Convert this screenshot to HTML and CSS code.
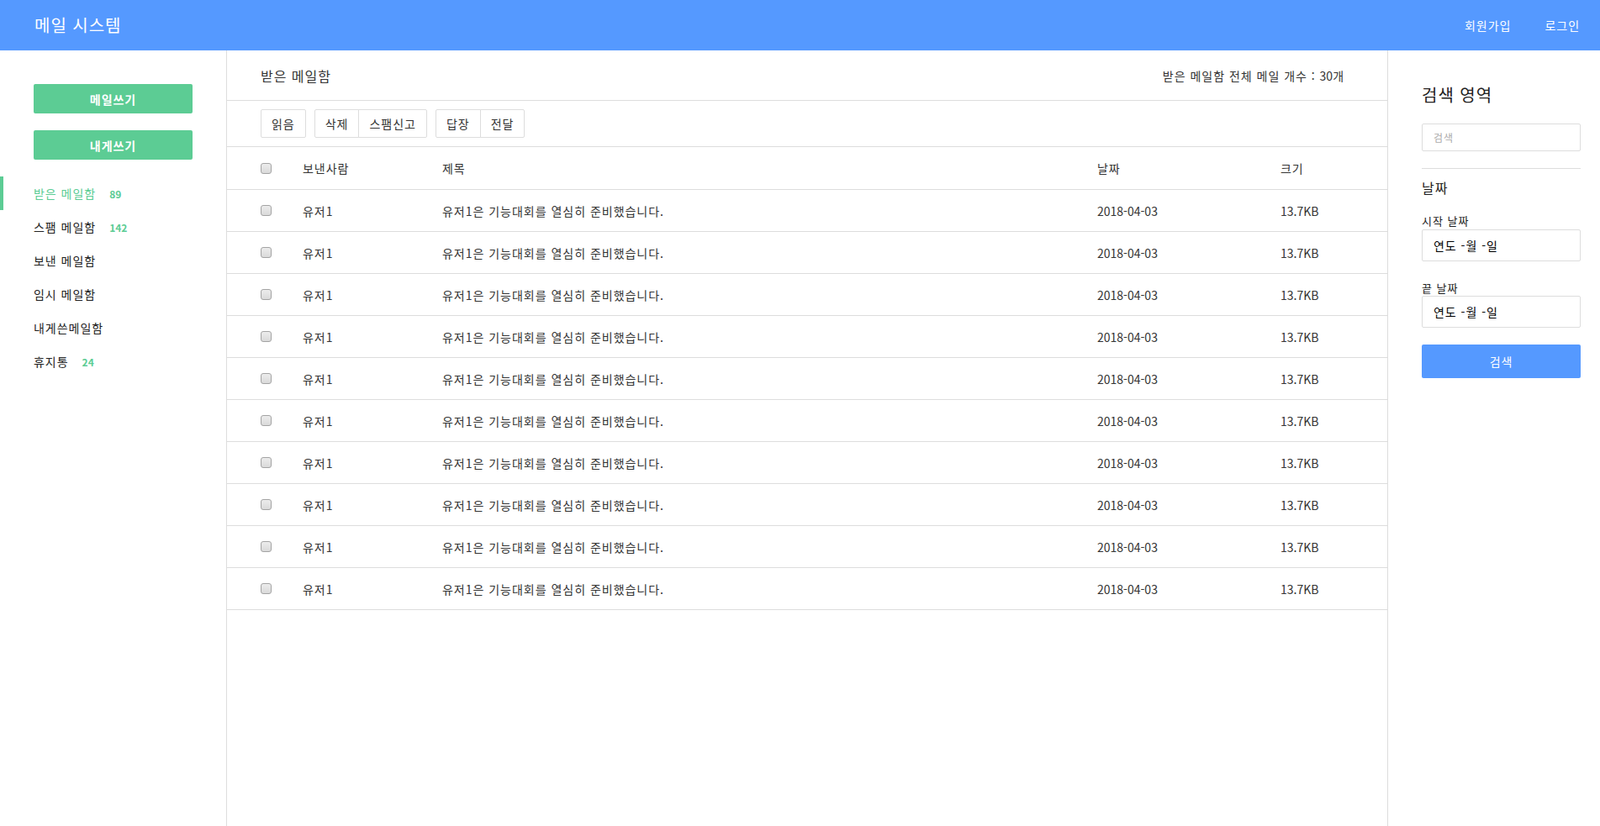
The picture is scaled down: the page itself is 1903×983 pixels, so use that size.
FILE: index.html
```html
<!DOCTYPE html>
<html lang="ko">
<head>
<meta charset="utf-8">
<title>메일 시스템</title>
<link rel="stylesheet" href="styles.css">
</head>
<body>
<header class="topbar">
  <div class="brand">메일 시스템</div>
  <nav class="top-links">
    <a href="#">회원가입</a>
    <a href="#">로그인</a>
  </nav>
</header>
<div class="layout">
  <aside class="sidebar">
    <button class="btn-green">메일쓰기</button>
    <button class="btn-green">내게쓰기</button>
    <ul class="folders">
      <li class="active"><span>받은 메일함</span><b class="badge">89</b></li>
      <li><span>스팸 메일함</span><b class="badge">142</b></li>
      <li><span>보낸 메일함</span></li>
      <li><span>임시 메일함</span></li>
      <li><span>내게쓴메일함</span></li>
      <li><span>휴지통</span><b class="badge">24</b></li>
    </ul>
  </aside>
  <main class="content">
    <div class="content-head">
      <h2>받은 메일함</h2>
      <div class="count">받은 메일함 전체 메일 개수 : <span class="num">30</span>개</div>
    </div>
    <div class="toolbar">
      <div class="btn-group"><button class="btn">읽음</button></div>
      <div class="btn-group"><button class="btn">삭제</button><button class="btn">스팸신고</button></div>
      <div class="btn-group"><button class="btn">답장</button><button class="btn">전달</button></div>
    </div>
    <table class="mail-table">
      <colgroup>
        <col class="c-check"><col class="c-from"><col class="c-title"><col class="c-date"><col>
      </colgroup>
      <thead>
        <tr><th class="cell-check"><input type="checkbox" class="chk"></th><th>보낸사람</th><th>제목</th><th>날짜</th><th>크기</th></tr>
      </thead>
      <tbody>
        <tr><td class="cell-check"><input type="checkbox" class="chk"></td><td>유저1</td><td>유저1은 기능대회를 열심히 준비했습니다.</td><td class="num">2018-04-03</td><td class="num">13.7KB</td></tr>
        <tr><td class="cell-check"><input type="checkbox" class="chk"></td><td>유저1</td><td>유저1은 기능대회를 열심히 준비했습니다.</td><td class="num">2018-04-03</td><td class="num">13.7KB</td></tr>
        <tr><td class="cell-check"><input type="checkbox" class="chk"></td><td>유저1</td><td>유저1은 기능대회를 열심히 준비했습니다.</td><td class="num">2018-04-03</td><td class="num">13.7KB</td></tr>
        <tr><td class="cell-check"><input type="checkbox" class="chk"></td><td>유저1</td><td>유저1은 기능대회를 열심히 준비했습니다.</td><td class="num">2018-04-03</td><td class="num">13.7KB</td></tr>
        <tr><td class="cell-check"><input type="checkbox" class="chk"></td><td>유저1</td><td>유저1은 기능대회를 열심히 준비했습니다.</td><td class="num">2018-04-03</td><td class="num">13.7KB</td></tr>
        <tr><td class="cell-check"><input type="checkbox" class="chk"></td><td>유저1</td><td>유저1은 기능대회를 열심히 준비했습니다.</td><td class="num">2018-04-03</td><td class="num">13.7KB</td></tr>
        <tr><td class="cell-check"><input type="checkbox" class="chk"></td><td>유저1</td><td>유저1은 기능대회를 열심히 준비했습니다.</td><td class="num">2018-04-03</td><td class="num">13.7KB</td></tr>
        <tr><td class="cell-check"><input type="checkbox" class="chk"></td><td>유저1</td><td>유저1은 기능대회를 열심히 준비했습니다.</td><td class="num">2018-04-03</td><td class="num">13.7KB</td></tr>
        <tr><td class="cell-check"><input type="checkbox" class="chk"></td><td>유저1</td><td>유저1은 기능대회를 열심히 준비했습니다.</td><td class="num">2018-04-03</td><td class="num">13.7KB</td></tr>
        <tr><td class="cell-check"><input type="checkbox" class="chk"></td><td>유저1</td><td>유저1은 기능대회를 열심히 준비했습니다.</td><td class="num">2018-04-03</td><td class="num">13.7KB</td></tr>
      </tbody>
    </table>
  </main>
  <aside class="search-panel">
    <h3 class="panel-title">검색 영역</h3>
    <input type="text" class="search-input" placeholder="검색">
    <div class="divider"></div>
    <h4 class="date-title">날짜</h4>
    <label class="field-label">시작 날짜</label>
    <div class="date-input">연도 -월 -일</div>
    <label class="field-label label-end">끝 날짜</label>
    <div class="date-input date-end">연도 -월 -일</div>
    <button class="btn-search">검색</button>
  </aside>
</div>
</body>
</html>
```

FILE: styles.css
```css
* { box-sizing: border-box; }
html, body { margin: 0; padding: 0; }
body {
  font-family: "Noto Sans CJK KR", "Noto Sans", sans-serif;
  font-size: 14px;
  color: #333;
  background: #fff;
  letter-spacing: 0.07em;
}
button, input { letter-spacing: inherit; }
.num { letter-spacing: 0; }

.topbar {
  height: 60px;
  background: #5599ff;
  display: flex;
  align-items: center;
  justify-content: space-between;
  padding: 0 24px 0 41px;
  color: #fff;
}
.brand { font-size: 20px; line-height: 28px; }
.top-links { display: flex; gap: 40px; }
.top-links a { color: #fff; text-decoration: none; font-size: 14px; line-height: 20px; }

.layout { display: flex; min-height: 923px; }

/* left sidebar */
.sidebar {
  width: 270px;
  flex: none;
  border-right: 1px solid #ddd;
  padding-top: 40px;
}
.btn-green {
  display: block;
  margin: 0 0 20px 40px;
  width: 189px;
  height: 35px;
  border: none;
  border-radius: 2px;
  background: #5ccc94;
  color: #fff;
  font-family: inherit;
  font-size: 14px;
  font-weight: bold;
  padding: 0;
}
.folders { list-style: none; margin: 0; padding: 0; }
.folders li {
  height: 40px;
  display: flex;
  align-items: center;
  padding-left: 40px;
  color: #222;
  font-size: 14px;
}
.folders li.active {
  border-left: 4px solid #5ccc94;
  padding-left: 36px;
  color: #5ccc94;
}
.badge {
  margin-left: 16px;
  font-size: 12px;
  font-weight: bold;
  color: #5ccc94;
  letter-spacing: 0;
}

/* main */
.content {
  width: 1381px;
  flex: none;
  border-right: 1px solid #ddd;
}
.content-head {
  height: 60px;
  border-bottom: 1px solid #ddd;
  display: flex;
  align-items: center;
  justify-content: space-between;
  padding: 0 51px 0 40px;
}
.content-head h2 { margin: 0; font-size: 16px; font-weight: normal; color: #333; }
.count { font-size: 14px; color: #333; }

.toolbar {
  height: 55px;
  border-bottom: 1px solid #ddd;
  padding: 10px 40px;
  display: flex;
  gap: 10px;
}
.btn-group { display: flex; }
.btn {
  height: 34px;
  padding: 0 12px;
  border: 1px solid #ddd;
  border-radius: 2px;
  background: #fff;
  color: #333;
  font-family: inherit;
  font-size: 14px;
}
.btn-group .btn + .btn { margin-left: -1px; }
.btn-group .btn:not(:last-child) { border-top-right-radius: 0; border-bottom-right-radius: 0; }
.btn-group .btn:not(:first-child) { border-top-left-radius: 0; border-bottom-left-radius: 0; }

.mail-table {
  width: 100%;
  table-layout: fixed;
  border-collapse: separate;
  border-spacing: 0;
}
.c-check { width: 90px; }
.c-from { width: 166px; }
.c-title { width: 779px; }
.c-date { width: 218px; }
.mail-table th, .mail-table td {
  padding: 0;
  text-align: left;
  font-weight: normal;
  font-size: 14px;
  color: #333;
  border-bottom: 1px solid #ddd;
  vertical-align: middle;
  white-space: nowrap;
}
.mail-table th { height: 51px; }
.mail-table td { height: 50px; }
.mail-table .cell-check { padding-left: 40px; }
.chk {
  -webkit-appearance: none;
  appearance: none;
  display: block;
  width: 13px;
  height: 13px;
  margin: 0;
  border: 1px solid #a3a3a3;
  border-radius: 3px;
  background: linear-gradient(#ececec, #dadada);
}

/* right panel */
.search-panel {
  flex: 1;
  padding: 39px 23px 0 40px;
}
.panel-title {
  margin: 0;
  font-size: 20px;
  line-height: 28px;
  font-weight: normal;
  color: #222;
}
.search-input {
  display: block;
  margin-top: 20px;
  width: 100%;
  height: 33px;
  border: 1px solid #ddd;
  border-radius: 2px;
  padding: 0 13px;
  font-family: inherit;
  font-size: 12px;
  color: #333;
  outline: none;
}
.search-input::placeholder { color: #aaa; }
.divider { margin-top: 20px; border-top: 1px solid #ddd; }
.date-title {
  margin: 11px 0 0;
  font-size: 16px;
  line-height: 22px;
  font-weight: normal;
  color: #222;
}
.field-label {
  display: block;
  margin-top: 20px;
  font-size: 13px;
  line-height: 18px;
  color: #222;
}
.label-end { margin-top: 23px; }
.date-input {
  margin-top: 1px;
  height: 38px;
  border: 1px solid #ddd;
  border-radius: 2px;
  padding: 0 13px;
  display: flex;
  align-items: center;
  font-size: 14px;
  color: #000;
}
.date-end { margin-top: 0; }
.btn-search {
  display: block;
  margin-top: 20px;
  width: 100%;
  height: 40px;
  border: none;
  border-radius: 2px;
  background: #5599ff;
  color: #fff;
  font-family: inherit;
  font-size: 14px;
}
```
